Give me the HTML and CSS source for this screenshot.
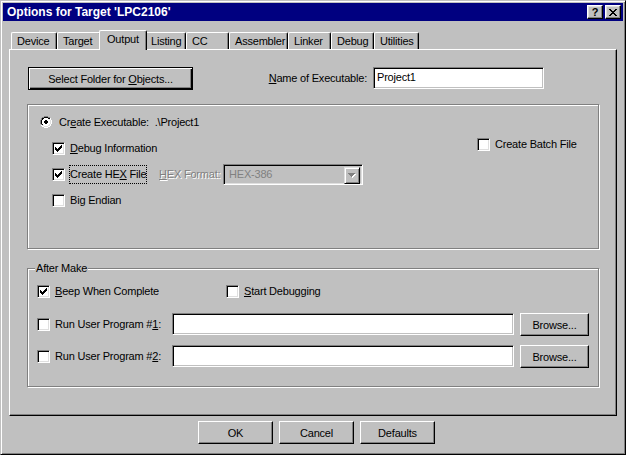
FILE: index.html
```html
<!DOCTYPE html>
<html>
<head>
<meta charset="utf-8">
<title>Options for Target</title>
<link rel="stylesheet" href="styles.css">
</head>
<body>
<div class="window">
  <div class="titlebar">
    <span class="title">Options for Target 'LPC2106'</span>
    <div class="cap-btns">
      <div class="cap-btn help">?</div>
      <div class="cap-btn close">
        <svg width="8" height="7" viewBox="0 0 8 7" shape-rendering="crispEdges"><path fill="#000" d="M0 0h2v1h-2z M6 0h2v1h-2z M1 1h2v1h-2z M5 1h2v1h-2z M2 2h4v1h-4z M3 3h2v1h-2z M2 4h4v1h-4z M1 5h2v1h-2z M5 5h2v1h-2z M0 6h2v1h-2z M6 6h2v1h-2z"/></svg>
      </div>
    </div>
  </div>

  <div class="tabs">
    <div class="tab tab-device">Device</div>
    <div class="tab tab-target">Target</div>
    <div class="tab tab-output selected">Output</div>
    <div class="tab tab-listing">Listing</div>
    <div class="tab tab-cc">CC</div>
    <div class="tab tab-asm">Assembler</div>
    <div class="tab tab-linker">Linker</div>
    <div class="tab tab-debug">Debug</div>
    <div class="tab tab-util">Utilities</div>
  </div>

  <div class="panel">
    <div class="row-top">
      <div class="btn default folder-btn"><span>Select Folder for <u>O</u>bjects...</span></div>
      <div class="name-label"><u>N</u>ame of Executable:</div>
      <div class="field name-field">Project1</div>
    </div>

    <div class="group group-exe">
      <div class="exe-left">
        <div class="opt-row">
          <span class="radio">
            <svg width="12" height="12" viewBox="0 0 12 12" shape-rendering="crispEdges">
              <path fill="#fff" d="M4 2h4v1h-4z M3 3h6v1h-6z M2 4h8v4h-8z M3 8h6v1h-6z M4 9h4v1h-4z"/>
              <path fill="#808080" d="M4 0h4v1h-4z M2 1h2v1h-2z M8 1h2v1h-2z M1 2h1v2h-1z M0 4h1v4h-1z M1 8h1v1h-1z"/>
              <path fill="#000" d="M4 1h4v1h-4z M2 2h2v1h-2z M8 2h2v1h-2z M2 3h1v1h-1z M1 4h1v4h-1z M2 8h1v1h-1z"/>
              <path fill="#dfdfdf" d="M9 3h1v1h-1z M10 4h1v4h-1z M9 8h1v1h-1z M2 9h2v1h-2z M8 9h2v1h-2z M4 10h4v1h-4z"/>
              <path fill="#fff" d="M10 2h1v2h-1z M11 4h1v4h-1z M10 8h1v2h-1z M1 9h1v1h-1z M2 10h2v1h-2z M8 10h2v1h-2z M4 11h4v1h-4z"/>
              <path fill="#000" d="M5 4h2v1h-2z M4 5h4v2h-4z M5 7h2v1h-2z"/>
            </svg>
          </span>
          <span class="lbl radio-lbl">Cr<u>e</u>ate Executable:&nbsp; .\Project1</span>
        </div>
        <div class="opt-row sub">
          <span class="check"><svg width="7" height="7" viewBox="0 0 7 7" shape-rendering="crispEdges"><path fill="#000" d="M6 0h1v1h-1z M5 1h2v1h-2z M0 2h1v1h-1z M4 2h3v1h-3z M0 3h2v1h-2z M3 3h3v1h-3z M0 4h5v1h-5z M1 5h3v1h-3z M2 6h1v1h-1z"/></svg></span>
          <span class="lbl"><u>D</u>ebug Information</span>
        </div>
        <div class="opt-row sub">
          <span class="check"><svg width="7" height="7" viewBox="0 0 7 7" shape-rendering="crispEdges"><path fill="#000" d="M6 0h1v1h-1z M5 1h2v1h-2z M0 2h1v1h-1z M4 2h3v1h-3z M0 3h2v1h-2z M3 3h3v1h-3z M0 4h5v1h-5z M1 5h3v1h-3z M2 6h1v1h-1z"/></svg></span>
          <span class="lbl focus">Create HE<u>X</u> File</span>
          <span class="disabled-lbl"><u>H</u>EX Format:</span>
          <div class="combo">
            <span class="combo-text">HEX-386</span>
            <span class="combo-btn"><svg width="8" height="5" viewBox="0 0 8 5" shape-rendering="crispEdges"><path fill="#fff" d="M1 1h7v1h-7z M2 2h5v1h-5z M3 3h3v1h-3z M4 4h1v1h-1z"/><path fill="#808080" d="M0 0h7v1h-7z M1 1h5v1h-5z M2 2h3v1h-3z M3 3h1v1h-1z"/></svg></span>
          </div>
        </div>
        <div class="opt-row sub">
          <span class="check"></span>
          <span class="lbl">Bi<u>g</u> Endian</span>
        </div>
      </div>
      <div class="exe-right">
        <div class="opt-row batch-row">
          <span class="check"></span>
          <span class="lbl">Create Batch File</span>
        </div>
      </div>
    </div>

    <div class="group group-after">
      <span class="legend">After Make</span>
      <div class="after-row beep-row">
        <div class="after-item beep-item">
          <span class="check"><svg width="7" height="7" viewBox="0 0 7 7" shape-rendering="crispEdges"><path fill="#000" d="M6 0h1v1h-1z M5 1h2v1h-2z M0 2h1v1h-1z M4 2h3v1h-3z M0 3h2v1h-2z M3 3h3v1h-3z M0 4h5v1h-5z M1 5h3v1h-3z M2 6h1v1h-1z"/></svg></span>
          <span class="lbl"><u>B</u>eep When Complete</span>
        </div>
        <div class="after-item">
          <span class="check"></span>
          <span class="lbl"><u>S</u>tart Debugging</span>
        </div>
      </div>
      <div class="after-row run-row run1">
        <div class="after-item run-item">
          <span class="check"></span>
          <span class="lbl">Run User Program #<u>1</u>:</span>
        </div>
        <div class="field run-field"></div>
        <div class="btn browse-btn">Browse...</div>
      </div>
      <div class="after-row run-row run2">
        <div class="after-item run-item">
          <span class="check"></span>
          <span class="lbl">Run User Program #<u>2</u>:</span>
        </div>
        <div class="field run-field"></div>
        <div class="btn browse-btn">Browse...</div>
      </div>
    </div>
  </div>

  <div class="footer">
    <div class="btn foot-btn">OK</div>
    <div class="btn foot-btn">Cancel</div>
    <div class="btn foot-btn">Defaults</div>
  </div>
</div>
</body>
</html>
```

FILE: styles.css
```css
* { box-sizing: border-box; }

html, body {
  margin: 0;
  padding: 0;
  background: #c0c0c0;
}

body {
  font-family: "Liberation Sans", Arial, sans-serif;
  font-size: 11px;
  letter-spacing: -0.2px;
  color: #000;
}

u { text-decoration: underline; text-underline-offset: 1px; }

.window {
  width: 626px;
  height: 455px;
  background: #c0c0c0;
  border: 1px solid;
  border-color: #c0c0c0 #000 #000 #c0c0c0;
  box-shadow: inset 1px 1px #fff, inset -1px -1px #808080;
  padding: 2px;
  display: flex;
  flex-direction: column;
}

/* Title bar */
.titlebar {
  height: 18px;
  flex: none;
  background: #000080;
  color: #fff;
  display: flex;
  align-items: center;
  padding: 0 2px 0 4px;
}
.title {
  flex: 1;
  font-weight: bold;
  font-size: 12px;
  letter-spacing: 0;
  line-height: 18px;
}
.cap-btns { display: flex; gap: 2px; }
.cap-btn {
  width: 16px;
  height: 14px;
  background: #c0c0c0;
  border: 1px solid;
  border-color: #fff #000 #000 #fff;
  box-shadow: inset -1px -1px #808080, inset 1px 1px #dfdfdf;
  display: flex;
  align-items: center;
  justify-content: center;
  color: #000;
}
.cap-btn.help {
  font-weight: bold;
  font-size: 11px;
  line-height: 12px;
  letter-spacing: 0;
}

/* Tabs */
.tabs {
  height: 19px;
  flex: none;
  margin: 9px 6px 0 6px;
  padding-left: 2px;
  display: flex;
  align-items: flex-end;
  position: relative;
  z-index: 1;
}
.tab {
  height: 17px;
  background: #c0c0c0;
  border-left: 1px solid #fff;
  border-top: 1px solid #fff;
  border-right: 1px solid #000;
  border-top-left-radius: 2px;
  border-top-right-radius: 2px;
  box-shadow: inset -1px 0 #808080;
  padding: 2px 0 0 5px;
  line-height: 12px;
  white-space: nowrap;
}
.tab.selected {
  height: 20px;
  margin: 0 -2px -1px -2px;
  padding-left: 7px;
  position: relative;
}
.tab-device { width: 46px; }
.tab-target { width: 44px; }
.tab-output { width: 48px; }
.tab-listing { width: 41px; }
.tab-cc { width: 43px; }
.tab-asm { width: 59px; }
.tab-linker { width: 43px; }
.tab-debug { width: 43px; }
.tab-util { width: 45px; }

/* Panel */
.panel {
  flex: none;
  height: 367px;
  margin: 0 6px;
  border: 1px solid;
  border-color: #fff #000 #000 #fff;
  box-shadow: inset -1px -1px #808080;
  padding: 17px 0 0 17px;
}

/* Buttons and fields */
.btn {
  background: #c0c0c0;
  border: 1px solid;
  border-color: #fff #000 #000 #fff;
  box-shadow: inset -1px -1px #808080;
  display: flex;
  align-items: center;
  justify-content: center;
  white-space: nowrap;
}
.btn.default {
  border-color: #000;
  box-shadow: inset 1px 1px #fff, inset -1px -1px #000, inset -2px -2px #808080;
}
.field {
  background: #fff;
  border: 1px solid;
  border-color: #808080 #fff #fff #808080;
  box-shadow: inset 1px 1px #000, inset -1px -1px #c0c0c0;
  padding: 2px 3px;
  line-height: 15px;
}

.row-top {
  display: flex;
  align-items: flex-start;
  margin-left: 1px;
}
.folder-btn { width: 165px; height: 23px; }
.name-label {
  width: 180px;
  padding-right: 6px;
  text-align: right;
  line-height: 22px;
}
.name-field { width: 171px; height: 22px; }

/* Group boxes */
.group {
  width: 572px;
  border: 1px solid #808080;
  box-shadow: inset 1px 1px #fff, 1px 1px #fff;
  position: relative;
}
.group-exe {
  height: 145px;
  margin-top: 14px;
  display: flex;
}
.exe-left {
  width: 449px;
  padding: 4px 0 0 12px;
}
.exe-right {
  padding-top: 33px;
}
.opt-row {
  height: 26px;
  display: flex;
  align-items: center;
  white-space: nowrap;
}
.opt-row.sub { padding-left: 12px; }
.batch-row { height: 13px; }

.radio { width: 12px; height: 12px; display: flex; margin-right: 5px; }
.radio-lbl { padding-left: 1px; }

.check {
  width: 13px;
  height: 13px;
  flex: none;
  background: #fff;
  border: 1px solid;
  border-color: #808080 #fff #fff #808080;
  box-shadow: inset 1px 1px #000, inset -1px -1px #dfdfdf;
  display: flex;
  align-items: center;
  justify-content: center;
  margin-right: 4px;
}
.check svg { display: block; }
.lbl {
  border: 1px solid transparent;
  line-height: 13px;
}
.lbl.focus {
  width: 78px;
  flex: none;
  border: 1px dotted #000;
  padding: 2px 0;
  overflow: hidden;
}
.disabled-lbl {
  width: 76px;
  flex: none;
  padding-left: 12px;
  color: #808080;
  text-shadow: 1px 1px #fff;
}
.combo {
  width: 140px;
  height: 21px;
  border: 1px solid;
  border-color: #808080 #fff #fff #808080;
  box-shadow: inset 1px 1px #000, inset -1px -1px #dfdfdf;
  background: #c0c0c0;
  padding: 2px;
  display: flex;
}
.combo-text {
  flex: 1;
  color: #808080;
  padding-left: 3px;
  line-height: 15px;
}
.combo-btn {
  width: 16px;
  height: 17px;
  background: #c0c0c0;
  border: 1px solid;
  border-color: #dfdfdf #000 #000 #dfdfdf;
  box-shadow: inset 1px 1px #fff, inset -1px -1px #808080;
  display: flex;
  align-items: center;
  justify-content: center;
}

/* After Make */
.group-after {
  height: 119px;
  margin-top: 19px;
  padding: 11px 0 0 9px;
}
.legend {
  position: absolute;
  top: -7px;
  left: 7px;
  padding: 0 1px;
  background: #c0c0c0;
  line-height: 13px;
}
.after-row {
  height: 23px;
  display: flex;
  align-items: center;
}
.after-item {
  display: flex;
  align-items: center;
  white-space: nowrap;
}
.after-item .check { margin-right: 4px; }
.beep-item { width: 189px; }
.run-row { align-items: flex-start; }
.run-row .after-item { height: 23px; }
.run1 { margin-top: 10px; }
.run2 { margin-top: 9px; }
.run-item { width: 135px; }
.run-field { width: 342px; height: 22px; }
.browse-btn { width: 69px; height: 23px; margin-left: 6px; }

/* Footer */
.footer {
  flex: none;
  display: flex;
  gap: 6px;
  margin-top: 5px;
  padding-left: 195px;
}
.foot-btn { width: 75px; height: 23px; }
```
